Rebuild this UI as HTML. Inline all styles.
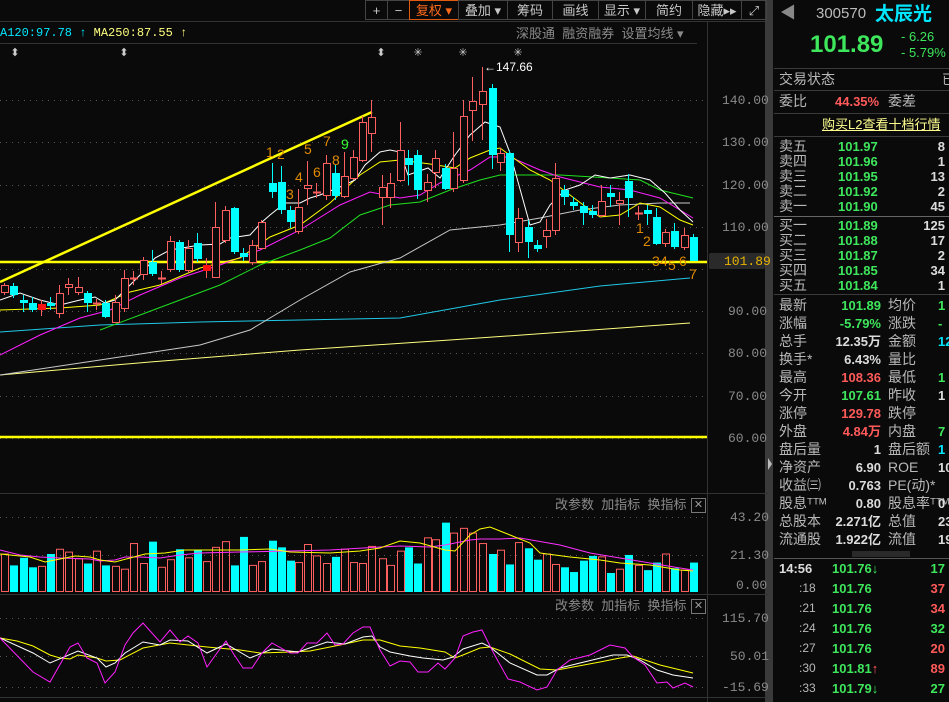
<!DOCTYPE html>
<html><head><meta charset="utf-8">
<style>
body{margin:0;width:949px;height:702px;background:#0a0a0a;overflow:hidden;font-family:"Liberation Sans","Noto Sans CJK SC",sans-serif;position:relative}
.t{position:absolute;white-space:nowrap;font-size:13px;line-height:15px}
.g{color:#b8b8b8}.gn{color:#3ee65c}.rd{color:#ff5a5a}.cy{color:#00e6ff}.wh{color:#dcdcdc}.yl{color:#f0f000}
.btn{position:absolute;top:0;height:20px;border:1px solid #444;color:#c8c8c8;font-size:13px;line-height:20px;text-align:center;box-sizing:border-box}
.hl{position:absolute;height:1px;background:#3a3a3a}
.mono{font-family:"Liberation Mono","Noto Sans CJK SC",monospace}
</style></head><body>
<svg id="c" width="949" height="702" style="position:absolute;left:0;top:0"></svg>

<div class="btn" style="left:365px;width:23px">+</div>
<div class="btn" style="left:387px;width:23px">−</div>
<div class="btn" style="left:409px;width:50px;border-color:#e05a10;color:#ff6a1a">复权 ▾</div>
<div class="btn" style="left:458px;width:50px">叠加 ▾</div>
<div class="btn" style="left:507px;width:46px">筹码</div>
<div class="btn" style="left:552px;width:47px">画线</div>
<div class="btn" style="left:598px;width:48px">显示 ▾</div>
<div class="btn" style="left:645px;width:48px">简约</div>
<div class="btn" style="left:692px;width:50px">隐藏▸▸</div>
<div class="btn" style="left:741px;width:26px">⤢</div>

<div class="t mono" style="left:0;top:26px;font-size:12px"><span class="cy">A120:97.78 ↑</span> <span class="yl" style="color:#ffff80">MA250:87.55 ↑</span></div>
<div class="t g" style="left:516px;top:26px;color:#8a8a8a">深股通 &nbsp;融资融券 &nbsp;设置均线 ▾</div>

<div class="t mono" style="left:722px;top:93px;color:#8a8a8a">140.00</div>
<div class="t mono" style="left:722px;top:135px;color:#8a8a8a">130.00</div>
<div class="t mono" style="left:722px;top:178px;color:#8a8a8a">120.00</div>
<div class="t mono" style="left:722px;top:220px;color:#8a8a8a">110.00</div>
<div class="t mono" style="left:728px;top:304px;color:#8a8a8a">90.00</div>
<div class="t mono" style="left:728px;top:346px;color:#8a8a8a">80.00</div>
<div class="t mono" style="left:728px;top:389px;color:#8a8a8a">70.00</div>
<div class="t mono" style="left:728px;top:431px;color:#8a8a8a">60.00</div>
<div style="position:absolute;left:709px;top:253px;width:56px;height:16px;background:#2a2a2a;border-radius:2px"></div>
<div class="t mono" style="left:724px;top:254px;color:#e8b400">101.89</div>
<div class="t mono" style="left:730px;top:510px;color:#8a8a8a">43.20</div>
<div class="t mono" style="left:730px;top:548px;color:#8a8a8a">21.30</div>
<div class="t mono" style="left:736px;top:578px;color:#8a8a8a">0.00</div>
<div class="t mono" style="left:722px;top:611px;color:#8a8a8a">115.70</div>
<div class="t mono" style="left:730px;top:649px;color:#8a8a8a">50.01</div>
<div class="t mono" style="left:722px;top:680px;color:#8a8a8a">-15.69</div>
<div class="t" style="left:555px;top:497px;color:#8a8a8a">改参数 &nbsp;加指标 &nbsp;换指标</div>
<div class="t" style="left:555px;top:598px;color:#8a8a8a">改参数 &nbsp;加指标 &nbsp;换指标</div>
<div style="position:absolute;left:691px;top:498px;width:13px;height:13px;border:1px solid #777;color:#999;font-size:11px;line-height:13px;text-align:center">✕</div>
<div style="position:absolute;left:691px;top:599px;width:13px;height:13px;border:1px solid #777;color:#999;font-size:11px;line-height:13px;text-align:center">✕</div>
<div class="t" style="left:484px;top:60px;color:#fff;font-size:12px">←147.66</div>
<div class="t" style="left:689px;top:267px;color:#e08a00;font-size:14px">7</div>

<div class="t" style="left:780px;top:6px;color:#888;font-size:16px">◀</div>
<div class="t" style="left:816px;top:6px;color:#bbb;font-size:15px">300570</div>
<div class="t cy" style="left:875px;top:4px;font-size:19px;line-height:22px;font-weight:bold">太辰光</div>
<div class="t gn" style="left:810px;top:31px;font-size:24px;line-height:28px;font-weight:bold">101.89</div>
<div class="t gn" style="left:901px;top:29px">- 6.26</div>
<div class="t gn" style="left:901px;top:45px">- 5.79%</div>
<div class="hl" style="left:774px;top:68px;width:175px"></div>
<div class="t g" style="left:779px;top:72px;font-size:14px">交易状态</div><div class="t g" style="left:942px;top:72px">已</div>
<div class="hl" style="left:774px;top:90px;width:175px"></div>
<div class="t g" style="left:779px;top:94px;font-size:14px">委比</div><div class="t rd" style="left:835px;top:94px;font-weight:bold">44.35%</div><div class="t g" style="left:888px;top:94px;font-size:14px">委差</div>
<div class="hl" style="left:774px;top:113px;width:175px"></div>
<div class="t" style="left:822px;top:117px;color:#ffff90;text-decoration:underline">购买L2查看十档行情</div>
<div class="hl" style="left:774px;top:136px;width:175px"></div>
<div id="ob"></div>
<div class="hl" style="left:774px;top:216px;width:175px;background:#666"></div>
<div class="hl" style="left:774px;top:294px;width:175px"></div>
<div id="st"></div>
<div style="position:absolute;left:852px;top:551px;width:58px;height:6px;background:#2a2a2a"></div>
<div class="hl" style="left:774px;top:558px;width:175px;background:#555"></div>
<div id="tk"></div>

<script>
const S=document.getElementById('c');let h='';
h+='<line x1="0" y1="43.5" x2="697" y2="43.5" stroke="#333"/>';
h+='<line x1="707.5" y1="22" x2="707.5" y2="702" stroke="#333"/>';
h+='<line x1="0" y1="21.5" x2="768" y2="21.5" stroke="#333"/>';
h+='<rect x="765" y="0" width="8" height="702" fill="#3a3a3a"/>';
h+='<polygon points="768,458 772,464 768,470" fill="#bbb"/>';
h+='<line x1="0" y1="493.5" x2="768" y2="493.5" stroke="#333"/>';
h+='<line x1="0" y1="594.5" x2="768" y2="594.5" stroke="#333"/>';
h+='<line x1="0" y1="697.5" x2="768" y2="697.5" stroke="#333"/>';
[100,142,185,227,269,311,353,396,438,517,555,618,656,687].forEach(y=>{h+=`<line x1="0" y1="${y}.5" x2="707" y2="${y}.5" stroke="#555" stroke-dasharray="1,5"/>`});
[[15,'⬍'],[124,'⬍'],[381,'⬍'],[418,'✳'],[463,'✳'],[518,'✳']].forEach(a=>{h+=`<text x="${a[0]}" y="56" fill="#ccc" font-size="11" text-anchor="middle">${a[1]}</text>`});
h+='<line x1="0" y1="282" x2="372" y2="112" stroke="#ffff00" stroke-width="2.5"/>';
h+='<line x1="0" y1="262" x2="707" y2="262" stroke="#ffff00" stroke-width="2.5"/>';
h+='<line x1="0" y1="437" x2="707" y2="437" stroke="#ffff00" stroke-width="2.5"/>';
function pl(p,c,w){h+=`<polyline points="${p}" fill="none" stroke="${c}" stroke-width="${w||1}"/>`}
pl("0,375 150,362 300,350 450,340 550,333 690,323","#ffff80");
pl("0,332 100,325 200,322 300,320 400,318 500,300 600,286 690,278","#20c8e8");
pl("0,375 100,360 200,345 250,330 300,300 350,272 400,258 450,230 500,225 540,218 580,210 620,205 660,203 690,203","#c8c8c8");
pl("100,330 140,315 180,300 220,285 260,265 300,250 330,238 360,215 390,205 420,202 450,190 480,180 500,175 560,175 610,178 640,180 660,190 693,198","#20e020");
pl("0,355 40,335 80,318 110,310 140,295 180,278 220,265 260,250 300,230 340,205 370,192 400,198 420,195 440,183 470,170 490,157 510,157 540,170 560,177 600,187 630,190 660,198 680,210 693,218","#ff20ff");
pl("0,310 60,308 100,305 130,292 160,285 200,268 240,258 270,237 300,225 330,203 360,175 380,162 400,160 430,164 455,168 470,158 490,150 500,148 530,170 550,180 570,195 590,210 600,217 620,215 640,203 660,207 680,220 693,225","#ffff00");
pl("0,300 20,293 40,300 60,305 80,300 95,297 105,303 115,300 125,290 140,275 155,258 170,250 200,245 220,244 230,238 250,235 262,222 270,215 285,203 300,203 310,198 320,195 340,187 355,180 365,165 380,152 390,150 400,152 408,175 428,168 440,178 455,155 470,135 485,122 500,127 510,153 530,225 540,222 550,205 565,190 580,185 595,175 610,178 630,175 650,180 665,193 680,210 693,222","#ffffff");
const C=[[4,285,292,283,295,'r'],[13,286,295,283,298,'c'],[23,300,303,295,312,'c'],[32,303,310,297,312,'c'],[41,304,310,300,316,'f'],[50,303,306,297,310,'c'],[59,293,313,285,318,'r'],[68,284,287,278,295,'r'],[78,287,292,277,295,'r'],[87,293,303,291,312,'c'],[96,303,304,299,310,'x'],[105,303,317,300,318,'c'],[115,302,322,295,323,'r'],[124,278,308,270,312,'r'],[133,278,279,271,285,'x'],[143,260,274,257,280,'r'],[152,262,274,250,276,'c'],[161,278,279,271,284,'x'],[170,241,269,236,272,'r'],[179,242,270,240,272,'c'],[188,248,270,240,273,'r'],[197,243,259,233,262,'c'],[206,265,271,258,278,'f'],[215,227,277,202,277,'r'],[225,210,240,206,243,'r'],[234,208,252,207,254,'c'],[243,253,257,248,261,'c'],[252,245,262,240,265,'r'],[261,222,248,220,249,'r'],[272,183,192,163,198,'c'],[281,182,210,166,214,'c'],[290,210,222,206,228,'c'],[298,207,231,189,234,'r'],[307,185,188,161,205,'r'],[316,192,193,183,198,'x'],[326,163,195,155,200,'r'],[335,173,196,165,200,'c'],[344,176,196,152,198,'r'],[353,157,178,150,180,'r'],[362,122,160,116,162,'r'],[371,117,133,100,152,'r'],[382,187,197,175,225,'r'],[390,183,197,173,208,'r'],[400,150,180,122,182,'r'],[408,158,165,150,185,'c'],[417,155,190,150,199,'c'],[427,182,190,174,202,'r'],[435,158,172,150,188,'r'],[445,168,189,164,190,'c'],[453,168,188,132,192,'r'],[463,116,180,100,183,'r'],[472,101,110,77,141,'r'],[482,91,104,67,140,'r'],[492,88,155,84,169,'c'],[500,153,162,148,171,'r'],[509,153,235,150,252,'c'],[518,218,242,208,252,'r'],[528,227,242,220,258,'c'],[537,245,249,240,252,'c'],[546,230,236,219,248,'r'],[555,178,230,163,235,'r'],[564,190,197,185,205,'c'],[573,202,206,197,210,'c'],[583,206,213,202,225,'c'],[592,211,215,205,218,'c'],[601,201,215,185,217,'r'],[610,193,197,185,207,'c'],[619,200,203,192,225,'r'],[628,181,198,174,217,'c'],[638,213,214,206,220,'x'],[647,210,214,205,225,'c'],[656,217,244,208,245,'c'],[665,232,243,229,247,'r'],[674,231,247,223,249,'c'],[684,235,247,228,250,'r'],[693,237,261,234,261,'c']];
const V=[40,28,36,26,27,40,45,42,35,30,43,28,27,24,51,30,53,26,34,45,36,44,32,47,53,28,58,28,32,54,47,33,31,50,38,30,37,45,31,30,48,35,28,43,47,30,57,55,73,62,67,62,51,40,44,29,52,46,34,40,29,26,21,33,38,37,20,24,39,28,23,31,40,25,23,31,20];
const R='#ff5f5f',Cy='#00ffff';
C.forEach((c,i)=>{const [x,t,b,hi,lo,ty]=c;const col=(ty=='c')?Cy:R;
 h+=`<line x1="${x+.5}" y1="${hi}" x2="${x+.5}" y2="${lo}" stroke="${col}"/>`;
 if(ty=='c')h+=`<rect x="${x-3}" y="${t}" width="8" height="${Math.max(b-t,1)}" fill="${Cy}"/>`;
 else if(ty=='f')h+=`<rect x="${x-3}" y="${t}" width="8" height="${b-t}" fill="#ff1010"/>`;
 else if(ty=='x')h+=`<line x1="${x-3}" y1="${t}.5" x2="${x+5}" y2="${t}.5" stroke="${R}" stroke-width="2"/>`;
 else h+=`<rect x="${x-2.5}" y="${t+.5}" width="7" height="${b-t}" fill="#0a0a0a" stroke="${R}"/>`;
 const v=V[i]||30, vy=592-v*0.95;
 if(ty=='c')h+=`<rect x="${x-3}" y="${vy}" width="8" height="${592-vy}" fill="${Cy}"/>`;
 else h+=`<rect x="${x-2.5}" y="${vy}" width="7" height="${592-vy-.5}" fill="none" stroke="${R}"/>`;
});
[[266,157,'1'],[277,159,'2'],[286,199,'3'],[295,182,'4'],[304,154,'5'],[313,177,'6'],[323,146,'7'],[332,165,'8'],[341,149,'9','#3f3'],[636,233,'1'],[643,246,'2'],[652,266,'3'],[660,266,'4'],[668,270,'5'],[679,266,'6']].forEach(a=>{h+=`<text x="${a[0]}" y="${a[1]}" fill="${a[3]||'#e08a00'}" font-size="14" font-family="Liberation Sans">${a[2]}</text>`});
pl("0,550 20,555 40,557 60,558 90,559 100,561 115,560 125,557 140,557 160,558 180,555 200,553 240,552 290,551 330,550 380,547 400,546 430,547 445,545 470,540 480,539 500,539 520,538 560,545 590,553 620,558 650,563 680,568 693,570","#ff30ff");
pl("0,554 30,557 45,562 55,560 75,556 90,557 100,560 115,562 130,558 145,554 165,553 185,550 240,550 270,549 290,552 330,553 360,551 380,548 400,541 420,543 445,550 455,551 470,535 480,529 490,527 510,535 530,543 540,553 570,557 600,560 620,563 650,565 680,570 693,571","#ffff00");
pl("0,638 17,641 33,646 50,655 60,658 70,659 78,655 97,658 106,661 120,660 143,648 170,643 207,647 240,650 260,653 290,652 310,651 340,645 363,640 380,640 400,646 420,648 445,652 455,658 463,655 480,648 490,647 510,654 540,669 557,670 600,662 620,658 633,656 645,660 660,665 693,673","#ffff00");
pl("0,638 33,653 50,663 78,651 97,658 106,667 115,663 125,653 143,642 160,645 170,640 188,641 207,653 226,644 250,658 272,649 298,652 327,642 345,644 363,637 372,636 380,647 390,652 410,656 423,658 443,660 453,657 463,649 482,643 490,647 510,663 537,675 547,675 560,668 580,663 613,655 627,655 640,660 657,670 673,675 693,678","#ffffff");
pl("0,638 33,672 50,682 70,647 78,643 87,658 97,663 105,683 115,672 125,645 133,633 143,623 160,642 170,630 180,642 188,636 198,643 207,667 217,653 226,641 233,653 243,668 252,668 262,653 272,643 290,653 298,653 307,643 317,643 327,633 335,645 343,644 353,633 363,627 370,627 380,650 390,666 400,661 410,662 418,672 428,672 438,663 445,669 455,658 463,636 473,632 482,630 493,652 508,679 520,682 537,690 547,687 557,670 570,660 590,655 610,645 625,648 633,657 645,665 657,683 667,682 673,688 685,683 693,687","#ff20ff");
S.innerHTML=h;

const ob=[['卖五','101.97','8'],['卖四','101.96','1'],['卖三','101.95','13'],['卖二','101.92','2'],['卖一','101.90','45'],['买一','101.89','125'],['买二','101.88','17'],['买三','101.87','2'],['买四','101.85','34'],['买五','101.84','1']];
let o='';ob.forEach((r,i)=>{const y=139+i*15+(i>=5?4:0);o+=`<div class="t g" style="left:779px;top:${y}px;font-size:14px">${r[0]}</div><div class="t gn" style="left:838px;top:${y}px;font-weight:bold">${r[1]}</div><div class="t wh" style="right:4px;top:${y}px;font-weight:bold">${r[2]}</div>`});
document.getElementById('ob').innerHTML=o;
const st=[['最新','101.89','gn','均价','1','gn'],['涨幅','-5.79%','gn','涨跌','-','gn'],['总手','12.35万','wh','金额','12','cy'],['换手*','6.43%','wh','量比','',''],['最高','108.36','rd','最低','1','gn'],['今开','107.61','gn','昨收','1','wh'],['涨停','129.78','rd','跌停','',''],['外盘','4.84万','rd','内盘','7','gn'],['盘后量','1','wh','盘后额','1','cy'],['净资产','6.90','wh','ROE','10','wh'],['收益㈢','0.763','wh','PE(动)*','',''],['股息ᵀᵀᴹ','0.80','wh','股息率ᵀᵀᴹ','0','wh'],['总股本','2.271亿','wh','总值','23','wh'],['流通股','1.922亿','wh','流值','19','wh']];
o='';st.forEach((r,i)=>{const y=298+i*18;o+=`<div class="t g" style="left:779px;top:${y}px;font-size:14px">${r[0]}</div><div class="t ${r[2]}" style="right:68px;top:${y}px;font-weight:bold">${r[1]}</div><div class="t g" style="left:888px;top:${y}px;font-size:14px">${r[3]}</div><div class="t ${r[5]}" style="left:938px;top:${y}px;font-weight:bold">${r[4]}</div>`});
document.getElementById('st').innerHTML=o;
const tk=[['14:56','101.76','↓','17','gn'],[':18','101.76','','37','rd'],[':21','101.76','','34','rd'],[':24','101.76','','32','gn'],[':27','101.76','','20','rd'],[':30','101.81','↑','89','rd'],[':33','101.79','↓','27','gn']];
o='';tk.forEach((r,i)=>{const y=561+i*20;o+=`<div class="t ${i?'g':'wh'}" style="left:${i?799:779}px;top:${y}px;${i?'font-size:12px':'font-weight:bold'}">${r[0]}</div><div class="t gn" style="left:832px;top:${y}px;font-weight:bold">${r[1]}<span class="${r[2]=='↑'?'rd':'gn'}">${r[2]}</span></div><div class="t ${r[4]}" style="right:4px;top:${y}px;font-weight:bold">${r[3]}</div>`});
document.getElementById('tk').innerHTML=o;
</script>
</body></html>
